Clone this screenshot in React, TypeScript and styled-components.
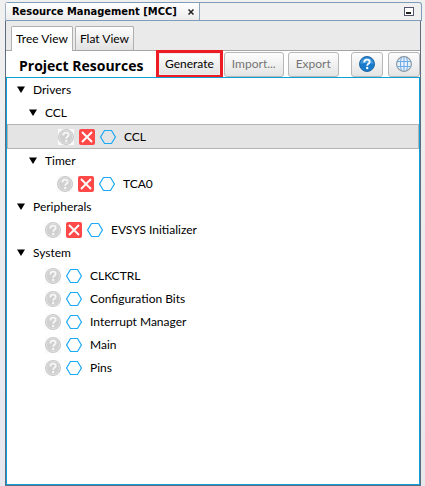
import React from "react";
import styled, { createGlobalStyle } from "styled-components";

const GlobalStyle = createGlobalStyle`
  * { box-sizing: border-box; }
  body { margin: 0; background: #f0f0f0; }
  button { font: inherit; color: inherit; margin: 0; }
`;

const Page = styled.div`
  min-height: 100vh;
  display: flex;
  flex-direction: column;
  padding: 2px 3px 0 5px;
  background: linear-gradient(#f0f0f0 20px, #e6e8ee);
  color: #000;
  font: 12px/16px Lato, "Open Sans", sans-serif;
`;

const WindowBar = styled.header`
  height: 19px;
  display: flex;
  align-items: stretch;
  justify-content: space-between;
  background: #f0f0f0;
  border: 1px solid #7f9db9;
  border-left-color: #a0afc3;
  border-radius: 3px 3px 0 0;
`;

const WindowTab = styled.div`
  display: flex;
  align-items: center;
  gap: 11px;
  padding: 1px 5px 0 6px;
  border-right: 1px solid #8ea4bd;
  background: linear-gradient(#fff, #ececec);
  font: bold 11px/14px "DejaVu Sans Condensed", "DejaVu Sans", sans-serif;
  white-space: nowrap;
`;

const BareButton = styled.button`
  display: flex;
  align-items: center;
  padding: 0;
  border: 0;
  background: none;
`;

const MinimizeButton = styled(BareButton)`
  margin-right: 7px;
`;

const Frame = styled.main`
  flex: 1;
  display: flex;
  flex-direction: column;
  margin-right: 1px;
  border: 1px solid #5f6c7c;
  border-top: 0;
  background: #fff;
`;

const TabStrip = styled.div`
  display: flex;
  align-items: flex-end;
  gap: 2px;
  height: 30px;
  padding: 0 5px;
  background: #eaeaea;
  border-bottom: 1px solid #a5a5a5;
`;

const ViewTab = styled.button<{ $active?: boolean }>`
  height: ${(p) => (p.$active ? 25 : 24)}px;
  margin-bottom: ${(p) => (p.$active ? -1 : 0)}px;
  padding: 0 4px;
  border: 1px solid #b0b0b0;
  border-bottom: 0;
  border-radius: 2px 2px 0 0;
  background: ${(p) => (p.$active ? "#fff" : "linear-gradient(#fdfdfd, #e2e2e2)")};
  white-space: nowrap;
`;

const Toolbar = styled.div`
  display: flex;
  align-items: center;
  height: 26px;
  padding-left: 13px;
`;

const Heading = styled.h1`
  flex: none;
  width: 140px;
  margin: 0;
  padding-top: 4px;
  font: bold 14px/20px "Open Sans", "Noto Sans", sans-serif;
  white-space: nowrap;
`;

const Actions = styled.div`
  flex: 1;
  display: flex;
  align-items: center;
  gap: 4px;
`;

const ToolButton = styled.button<{ $highlight?: boolean }>`
  display: flex;
  align-items: center;
  justify-content: center;
  height: ${(p) => (p.$highlight ? 22 : 25)}px;
  padding: 0 ${(p) => (p.$highlight ? 5 : 7)}px;
  border: 1px solid ${(p) => (p.$highlight ? "#ececec" : "#b8b8b8")};
  border-radius: ${(p) => (p.$highlight ? 0 : 3)}px;
  background: linear-gradient(#fdfdfd, #e4e4e4);
  white-space: nowrap;
  outline: ${(p) => (p.$highlight ? "3px solid #ed1c24" : "none")};
  &:disabled { color: #757575; }
`;

const IconActions = styled.div`
  display: flex;
  gap: 5px;
`;

const Tree = styled.ul`
  flex: 1;
  margin: 0;
  padding: 0;
  list-style: none;
  border: 1px solid #0e9fd8;
`;

const Row = styled.li<{ $depth: number; $selected?: boolean }>`
  display: flex;
  align-items: center;
  height: ${(p) => (p.$selected ? 25 : 23)}px;
  padding-left: ${(p) => 10 + p.$depth * 12}px;
  border: ${(p) => (p.$selected ? "1px solid #b4b4b4" : "0 solid transparent")};
  background: ${(p) => (p.$selected ? "#e4e4e4" : "transparent")};
  white-space: nowrap;
`;

const GroupToggle = styled(BareButton)`
  gap: 8px;
`;

const Leaf = styled.div`
  display: flex;
  align-items: center;
  gap: 5px;
  padding-left: 16px;
  svg { flex: none; }
`;

const LeafName = styled.span`
  padding-left: 3px;
`;

const Triangle = () => (
  <svg width="8" height="7" aria-hidden="true">
    <path d="M0 .5h8L4 7z" fill="#000" />
  </svg>
);

const QuestionGlyph = ({ color }: { color: string }) => (
  <g>
    <path d="M5.300 6.400C5.300 4.500 6.500 3.600 8 3.600s2.700.9 2.700 2.300C10.700 7.400 8.200 7.600 8.200 9.700" fill="none" stroke={color} strokeWidth="1.800" />
    <circle cx="8.200" cy="12" r="1.200" fill={color} />
  </g>
);

const StatusIcon = () => (
  <svg width="16" height="16" viewBox="0 0 16 16" aria-hidden="true">
    <rect width="16" height="16" fill="#fafafa" />
    <circle cx="8" cy="8" r="7.500" fill="#d0d0d0" stroke="#c0c0c0" strokeWidth=".8" />
    <circle cx="8" cy="8" r="6.600" fill="none" stroke="#e2e2e2" strokeWidth=".8" />
    <QuestionGlyph color="#f7f7f7" />
  </svg>
);

const RemoveIcon = () => (
  <svg width="16" height="16" viewBox="0 0 16 16" aria-hidden="true">
    <rect width="16" height="16" rx="2" fill="#ff4848" />
    <path d="M3 3l10 10M13 3L3 13" stroke="#fff" strokeWidth="1.900" />
  </svg>
);

const HexagonIcon = () => (
  <svg width="16" height="16" viewBox="0 0 16 16" aria-hidden="true">
    <path d="M4.500 1.500h7L15.400 8l-3.900 6.500h-7L.6 8z" fill="none" stroke="#1eaaf6" strokeWidth="1.200" />
  </svg>
);

const HelpIcon = () => (
  <svg width="16" height="16" viewBox="0 0 16 16" aria-hidden="true">
    <circle cx="8" cy="8" r="7.500" fill="#1979ca" stroke="#2468a4" />
    <path d="M1.500 8a6.500 6.500 0 0 1 13 0Q8 6 1.500 8z" fill="#3e98df" />
    <QuestionGlyph color="#fff" />
  </svg>
);

const GlobeIcon = () => (
  <svg width="16" height="16" viewBox="0 0 16 16" aria-hidden="true">
    <circle cx="8" cy="8" r="7.400" fill="#e6f1fd" stroke="#82929f" strokeWidth="1.100" />
    <path d="M1.500 5.500h13M1.500 10.500h13M8 1.500v13M5.300 1.800C4.200 5 4.200 11 5.300 14.200M10.700 1.800c1.100 3.200 1.100 9.200 0 12.400" fill="none" stroke="#6fa8e6" />
  </svg>
);

type Item = { name: string; depth: number; group?: boolean; removable?: boolean; selected?: boolean };

const items: Item[] = [
  { name: "Drivers", depth: 0, group: true },
  { name: "CCL", depth: 1, group: true },
  { name: "CCL", depth: 2, removable: true, selected: true },
  { name: "Timer", depth: 1, group: true },
  { name: "TCA0", depth: 2, removable: true },
  { name: "Peripherals", depth: 0, group: true },
  { name: "EVSYS Initializer", depth: 1, removable: true },
  { name: "System", depth: 0, group: true },
  { name: "CLKCTRL", depth: 1 },
  { name: "Configuration Bits", depth: 1 },
  { name: "Interrupt Manager", depth: 1 },
  { name: "Main", depth: 1 },
  { name: "Pins", depth: 1 },
];

export default function App() {
  return (
    <Page>
      <GlobalStyle />
      <WindowBar>
        <WindowTab>
          Resource Management [MCC]
          <BareButton aria-label="Close">
            <svg width="6" height="6" aria-hidden="true">
              <path d="M.5.500l5 5M5.500.500l-5 5" stroke="#222" strokeWidth="1.500" />
            </svg>
          </BareButton>
        </WindowTab>
        <MinimizeButton aria-label="Minimize">
          <svg width="10" height="9" aria-hidden="true">
            <rect x=".5" y=".5" width="9" height="8" fill="#fff" stroke="#52576b" />
            <rect x="2" y="5" width="5" height="2" fill="#222" />
          </svg>
        </MinimizeButton>
      </WindowBar>
      <Frame>
        <TabStrip role="tablist">
          <ViewTab role="tab" aria-selected="true" $active>Tree View</ViewTab>
          <ViewTab role="tab" aria-selected="false">Flat View</ViewTab>
        </TabStrip>
        <Toolbar>
          <Heading>Project Resources</Heading>
          <Actions>
            <ToolButton $highlight>Generate</ToolButton>
            <ToolButton disabled>Import...</ToolButton>
            <ToolButton disabled>Export</ToolButton>
          </Actions>
          <IconActions>
            <ToolButton aria-label="Help"><HelpIcon /></ToolButton>
            <ToolButton aria-label="Web"><GlobeIcon /></ToolButton>
          </IconActions>
        </Toolbar>
        <Tree role="tree" aria-label="Project Resources">
          {items.map((item, i) => (
            <Row key={i} role="treeitem" aria-selected={!!item.selected} $depth={item.depth} $selected={item.selected}>
              {item.group ? (
                <GroupToggle aria-expanded="true"><Triangle />{item.name}</GroupToggle>
              ) : (
                <Leaf>
                  <StatusIcon />
                  {item.removable && <RemoveIcon />}
                  <HexagonIcon />
                  <LeafName>{item.name}</LeafName>
                </Leaf>
              )}
            </Row>
          ))}
        </Tree>
      </Frame>
    </Page>
  );
}
